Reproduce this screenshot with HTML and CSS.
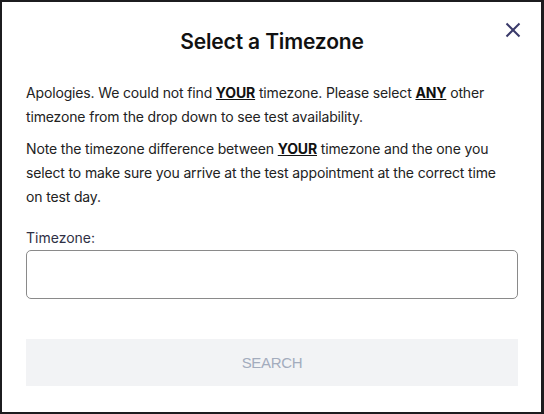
FILE: index.html
```html
<!DOCTYPE html>
<html lang="en">
<head>
<meta charset="utf-8">
<title>Select a Timezone</title>
<link rel="stylesheet" href="styles.css">
</head>
<body>
<div class="modal">
  <header class="modal-header">
    <h1 class="modal-title">Select a Timezone</h1>
    <button class="close-btn" aria-label="Close">
      <svg width="16" height="16" viewBox="0 0 16 16"><path d="M1.5 1.5 L14.5 14.5 M14.5 1.5 L1.5 14.5" stroke="#3a3a6a" stroke-width="2" fill="none"/></svg>
    </button>
  </header>
  <div class="modal-body">
    <p class="text">Apologies. We could not find <strong>YOUR</strong> timezone. Please select <strong>ANY</strong> other timezone from the drop down to see test availability.</p>
    <p class="text">Note the timezone difference between <strong>YOUR</strong> timezone and the one you select to make sure you arrive at the test appointment at the correct time on test day.</p>
    <label class="field-label" for="tz">Timezone:</label>
    <input class="field-input" id="tz" type="text">
    <button class="search-btn" disabled>SEARCH</button>
  </div>
</div>
</body>
</html>
```
FILE: styles.css
```css
html, body {
  margin: 0;
  padding: 0;
  height: 100%;
}
body {
  background: #1c1c1f;
  font-family: Inter, "Noto Sans", sans-serif;
  padding: 2px 3px 2px 2px;
  box-sizing: border-box;
}
.modal {
  background: #fff;
  height: 100%;
  box-sizing: border-box;
  padding: 0 23px 0 24px;
}
.modal-header {
  position: relative;
  padding-top: 26px;
  height: 79px;
  box-sizing: border-box;
}
.modal-title {
  margin: 0;
  text-align: center;
  font-size: 21px;
  font-weight: 600;
  color: #111;
  letter-spacing: -0.15px;
  line-height: 28px;
}
.close-btn {
  position: absolute;
  top: 20px;
  right: -3px;
  border: 0;
  background: none;
  padding: 0;
  width: 16px;
  height: 16px;
  cursor: pointer;
}
.close-btn svg { display: block; }
.modal-body {
  display: flex;
  flex-direction: column;
}
.text {
  margin: 0 0 8px;
  padding-right: 10px;
  font-size: 14px;
  line-height: 24px;
  color: #222;
  letter-spacing: -0.15px;
}
.text strong {
  font-weight: 700;
  text-decoration: underline;
  color: #111;
}
.field-label {
  margin-top: 11px;
  font-size: 14px;
  line-height: 20px;
  color: #2f3045;
}
.field-input {
  margin-top: 2px;
  height: 49px;
  box-sizing: border-box;
  border: 1px solid #8a8a8a;
  border-radius: 5px;
  font: inherit;
  padding: 0 12px;
}
.search-btn {
  margin-top: 40px;
  height: 47px;
  border: 0;
  background: #f2f3f5;
  color: #a3acbd;
  font-family: "Liberation Sans", Arial, sans-serif;
  font-size: 15px;
  letter-spacing: -0.3px;
}
```
